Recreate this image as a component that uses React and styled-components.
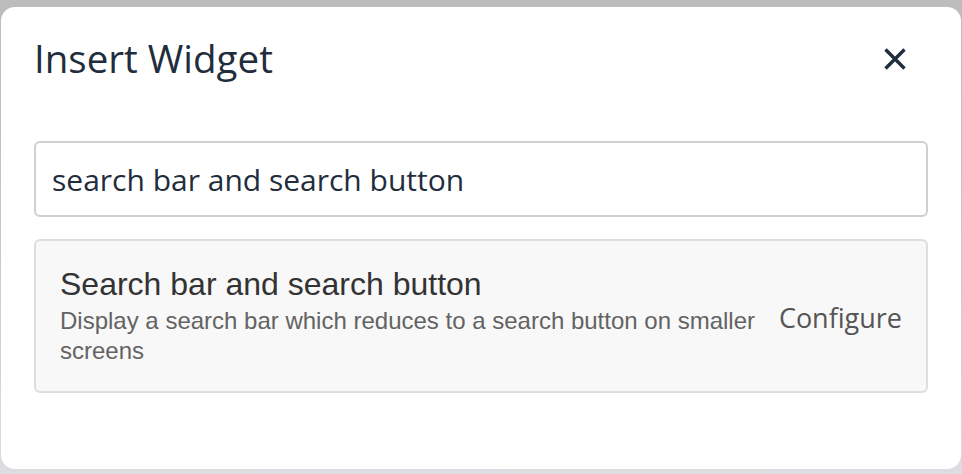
import React from 'react';
import styled, { createGlobalStyle } from 'styled-components';

const GlobalStyle = createGlobalStyle`
  html, body {
    margin: 0;
    padding: 0;
    height: 100%;
  }
  body {
    background: linear-gradient(#bcbcbc 0, #c4c4c4 40%, #dcdde0 100%);
    font-family: "Open Sans", "Noto Sans", sans-serif;
  }
`;

const Backdrop = styled.div`
  width: 962px;
  height: 474px;
  padding: 7px 1px 5px 1px;
  box-sizing: border-box;
`;

const Modal = styled.div`
  height: 100%;
  background: #fff;
  border-radius: 14px;
  box-sizing: border-box;
  display: flex;
  flex-direction: column;
`;

const Header = styled.div`
  display: flex;
  align-items: center;
  justify-content: space-between;
  padding: 25px 55px 0 33px;
`;

const Title = styled.h2`
  margin: 0;
  font-family: "Open Sans", sans-serif;
  font-weight: 400;
  font-size: 38.5px;
  line-height: 53px;
  color: #1f2d3d;
`;

const CloseButton = styled.button`
  border: 0;
  background: none;
  padding: 0;
  width: 22px;
  height: 22px;
  display: flex;
  align-items: center;
  justify-content: center;
  cursor: pointer;
`;

const Body = styled.div`
  padding: 56px 33px 0 33px;
  display: flex;
  flex-direction: column;
  gap: 22px;
`;

const SearchInput = styled.input`
  height: 76px;
  box-sizing: border-box;
  border: 2px solid #cfcfcf;
  border-radius: 6px;
  padding: 0 16px;
  font-family: "Open Sans", sans-serif;
  font-size: 30px;
  color: #1f2d3d;
  outline: none;
`;

const WidgetCard = styled.div`
  display: flex;
  align-items: center;
  background: #f8f8f8;
  border: 2px solid #dedede;
  border-radius: 6px;
  padding: 24px;
  height: 154px;
  box-sizing: border-box;
`;

const CardText = styled.div`
  width: 700px;
  align-self: flex-start;
  font-family: "Liberation Sans", Arial, sans-serif;
`;

const CardTitle = styled.div`
  font-size: 32px;
  color: #333;
  line-height: 38px;
`;

const CardDesc = styled.div`
  margin-top: 3px;
  font-size: 24px;
  color: #636363;
  line-height: 30px;
`;

const ConfigureLink = styled.a`
  margin-left: auto;
  margin-top: 2px;
  font-family: "Open Sans", sans-serif;
  font-size: 27px;
  color: #555;
  text-decoration: none;
  white-space: nowrap;
`;

export default function App() {
  return (
    <>
      <GlobalStyle />
      <Backdrop>
        <Modal>
          <Header>
            <Title>Insert Widget</Title>
            <CloseButton aria-label="Close">
              <svg width="22" height="22" viewBox="0 0 22 22">
                <path d="M1.5 1.5 L20.5 20.5 M20.5 1.5 L1.5 20.5" stroke="#1f2d3d" strokeWidth="3.4" />
              </svg>
            </CloseButton>
          </Header>
          <Body>
            <SearchInput defaultValue="search bar and search button" />
            <WidgetCard>
              <CardText>
                <CardTitle>Search bar and search button</CardTitle>
                <CardDesc>Display a search bar which reduces to a search button on smaller screens</CardDesc>
              </CardText>
              <ConfigureLink href="#">Configure</ConfigureLink>
            </WidgetCard>
          </Body>
        </Modal>
      </Backdrop>
    </>
  );
}
